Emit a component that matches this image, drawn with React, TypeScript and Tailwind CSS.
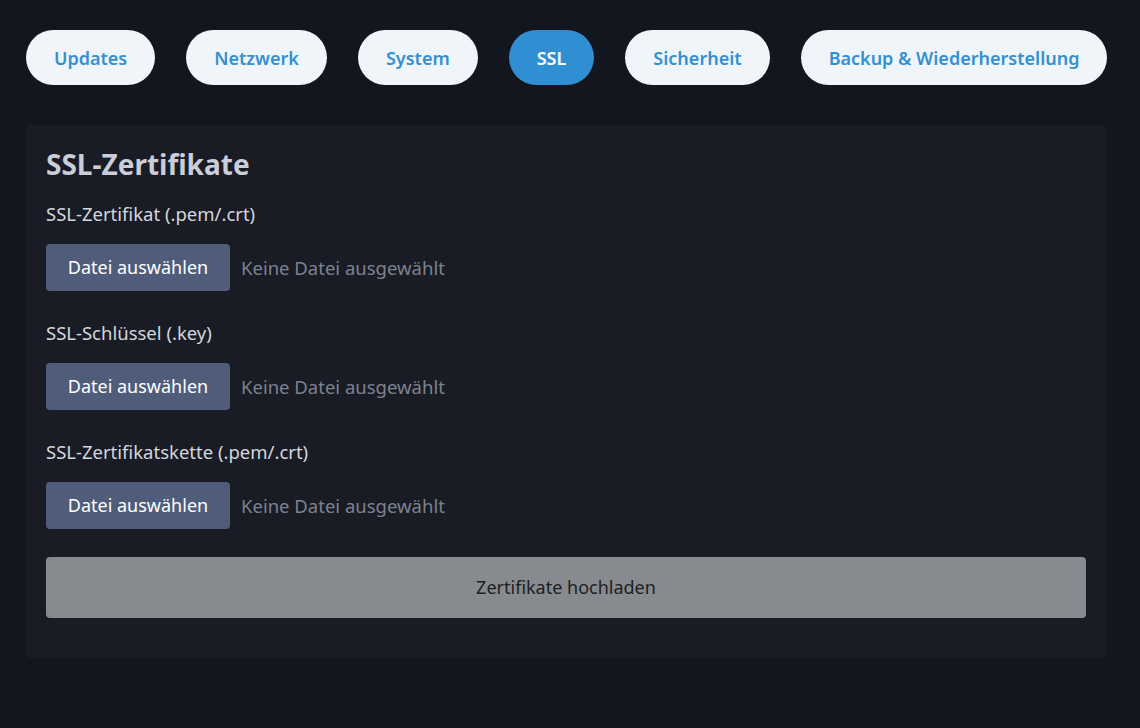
const tabs = ["Updates", "Netzwerk", "System", "SSL", "Sicherheit", "Backup & Wiederherstellung"];

const fields = [
  "SSL-Zertifikat (.pem/.crt)",
  "SSL-Schlüssel (.key)",
  "SSL-Zertifikatskette (.pem/.crt)",
];

export default function App() {
  return (
    <div
      className="min-h-[728px] w-full bg-[#13161f] px-[26px] pt-[30px]"
      style={{ fontFamily: '"Noto Sans", "Open Sans", sans-serif' }}
    >
      {/* Tabs */}
      <div className="flex gap-[31px]">
        {tabs.map((t) => (
          <button
            key={t}
            className={`h-[55px] rounded-full px-[28px] pt-[2px] text-[18px] font-semibold ${
              t === "SSL" ? "bg-[#2f8fd2] text-white" : "bg-[#f0f5f9] text-[#3390d3]"
            }`}
          >
            {t}
          </button>
        ))}
      </div>

      {/* Panel */}
      <div className="mt-[40px] w-[1080px] rounded-[4px] bg-[#191c24] px-[20px] pt-[21px] pb-[40px]">
        <h2 className="text-[28px] leading-[36px] font-bold text-[#c9ced8]">SSL-Zertifikate</h2>
        <div className="mt-[20px] flex flex-col gap-[30px]">
          {fields.map((f) => (
            <div key={f}>
              <div className="text-[18.5px] leading-[24px] text-[#d3d7de]">{f}</div>
              <div className="mt-[18px] flex items-center gap-[11px]">
                <button className="h-[47px] w-[184px] rounded-[4px] bg-[#4f5d7b] text-[18px] text-white">
                  Datei auswählen
                </button>
                <span className="text-[18.5px] text-[#7b828f]">Keine Datei ausgewählt</span>
              </div>
            </div>
          ))}
        </div>
        <button className="mt-[28px] h-[61px] w-full rounded-[4px] bg-[#878a8e] text-[18px] text-[#1d1f23]">
          Zertifikate hochladen
        </button>
      </div>
    </div>
  );
}
